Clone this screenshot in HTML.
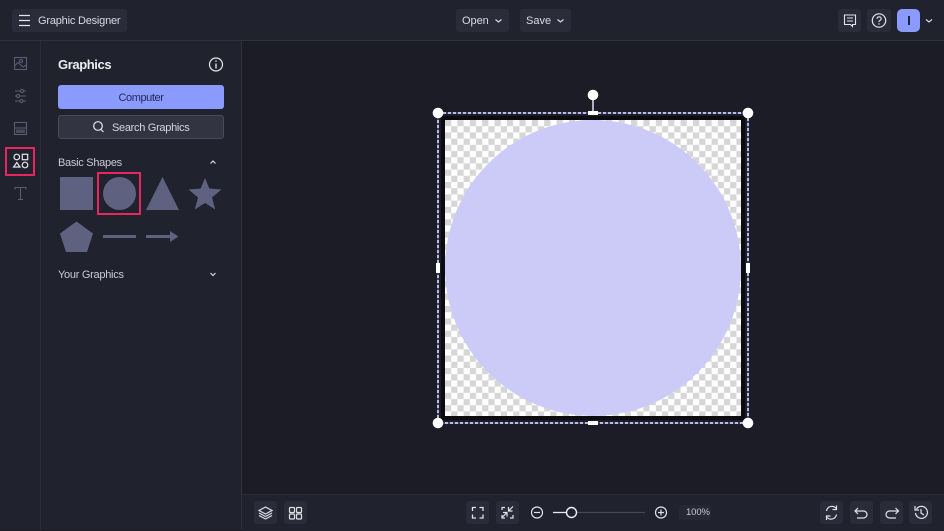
<!DOCTYPE html>
<html><head><meta charset="utf-8"><style>
html,body{margin:0;padding:0}
body{width:944px;height:530px;overflow:hidden;background:#1c1c26;position:relative;font-family:"Liberation Sans",sans-serif;color:#d9dae2}
.a{position:absolute}
.b{position:absolute;background:#2a2c39;border-radius:3px}
.t{position:absolute;white-space:nowrap;line-height:14px}
svg{position:absolute;overflow:visible}
</style></head><body>
<div class="a" style="left:0;top:0;width:944px;height:40px;background:#20222e;border-bottom:1px solid #2f313d"></div>
<div class="a" style="left:0;top:41px;width:40px;height:489px;background:#20222e;border-right:1px solid #2a2c38"></div>
<div class="a" style="left:41px;top:41px;width:200px;height:489px;background:#20222e;border-right:1px solid #2f313d"></div>
<div class="a" style="left:242px;top:494px;width:702px;height:36px;background:#20222e;border-top:1px solid #2a2c38"></div>

<div class="b" style="left:12px;top:9px;width:115px;height:23px"></div>
<svg style="left:0;top:0" width="40" height="40"><path d="M19 15.500H30M19 20.500H30M19 25.500H30" stroke="#e4e5ec" stroke-width="1.300" fill="none"/></svg>
<div class="t" style="left:38px;top:14px;font-size:11px;letter-spacing:-.2px">Graphic Designer</div>

<div class="b" style="left:456px;top:9px;width:53px;height:23px"></div>
<div class="t" style="left:462px;top:14px;font-size:11px;letter-spacing:-.05px">Open</div>
<svg style="left:0;top:0" width="10" height="10"><path d="M495.500 19.500L498.500 22L501.500 19.500" stroke="#d9dae2" stroke-width="1.200" fill="none"/></svg>
<div class="b" style="left:520px;top:9px;width:51px;height:23px"></div>
<div class="t" style="left:526px;top:14px;font-size:11px;letter-spacing:0">Save</div>
<svg style="left:0;top:0" width="10" height="10"><path d="M557.500 19.500L560.500 22L563.500 19.500" stroke="#d9dae2" stroke-width="1.200" fill="none"/></svg>

<div class="b" style="left:838px;top:9px;width:23px;height:23px"></div>
<div class="b" style="left:867px;top:9px;width:24px;height:23px"></div>
<div class="a" style="left:897px;top:9px;width:23px;height:23px;background:#8b9bfd;border-radius:5px"></div>
<div class="a" style="left:908px;top:16px;width:1.500px;height:9px;background:#20243c"></div>
<svg style="left:0;top:0" width="10" height="10">
<path d="M844.500 15H855.500V24.500H852.500V26.500L850.500 24.500H844.500Z M847 18H853M847 21H853" stroke="#e4e5ec" stroke-width="1.100" fill="none"/>
<circle cx="879" cy="20.500" r="6.700" stroke="#e4e5ec" stroke-width="1.200" fill="none"/>
<path d="M877 18.800C877 16 881.200 16.300 881.200 18.800C881.200 20.400 879 20.300 879 22" stroke="#e4e5ec" stroke-width="1.100" fill="none"/>
<circle cx="879" cy="24" r=".7" fill="#e4e5ec"/>
<path d="M926 19.500L929 22L932 19.500" stroke="#d9dae2" stroke-width="1.200" fill="none"/>
</svg>

<svg style="left:0;top:0" width="40" height="10" fill="none" stroke="#5a5c72" stroke-width="1.100">
<rect x="14.500" y="57.500" width="12" height="12"/><circle cx="21" cy="61" r="1.500"/><path d="M14.500 66L18 62.500L23 67L26.500 65"/>
<path d="M15 91H26M15 96H26M15 101H26"/><circle cx="22" cy="91" r="1.600" fill="#20222e"/><circle cx="18" cy="96" r="1.600" fill="#20222e"/><circle cx="21.500" cy="101" r="1.600" fill="#20222e"/>
<rect x="14.500" y="122.500" width="12" height="12"/><path d="M14.500 128H26.500"/><rect x="16" y="129.500" width="9" height="3.500" fill="#5a5c72" stroke="none" opacity=".7"/>
<path d="M15 189.500V187.500H26V189.500M20.500 187.500V199.500M18 199.500H23" />
</svg>
<div class="a" style="left:5px;top:147px;width:26px;height:25px;border:2.500px solid #e8265f;background:#20222e"></div>
<svg style="left:0;top:0" width="40" height="10" fill="none" stroke="#e6e7ee" stroke-width="1.200">
<circle cx="16.800" cy="157" r="2.800"/><rect x="22.300" y="154.300" width="5.400" height="5.400"/><path d="M16.800 162.500L20 167H13.600Z"/><circle cx="25" cy="165" r="2.800"/>
</svg>

<div class="t" style="left:58px;top:58px;font-size:13px;font-weight:bold;letter-spacing:-.4px;color:#eceded">Graphics</div>
<svg style="left:0;top:0" width="10" height="10" fill="none">
<circle cx="216" cy="64.500" r="6.500" stroke="#e6e7ee" stroke-width="1.200"/><path d="M216 63.500V68.500" stroke="#e6e7ee" stroke-width="1.300"/><circle cx="216" cy="61" r=".8" fill="#e6e7ee"/>
</svg>
<div class="a" style="left:58px;top:85px;width:166px;height:24px;background:#8b9bfd;border-radius:3px"></div>
<div class="t" style="left:58px;top:91px;width:166px;text-align:center;font-size:11px;color:#23285a;letter-spacing:-.4px">Computer</div>
<div class="a" style="left:58px;top:115px;width:164px;height:22px;background:#323442;border:1px solid #484a59;border-radius:3px"></div>
<svg style="left:0;top:0" width="10" height="10" fill="none" stroke="#e6e7ee" stroke-width="1.200"><circle cx="98" cy="126" r="4.300"/><path d="M101 129.500L103.500 132"/></svg>
<div class="t" style="left:112px;top:121px;font-size:11px;letter-spacing:-.3px;color:#d5d6df">Search Graphics</div>

<div class="t" style="left:58px;top:156px;font-size:11px;letter-spacing:-.28px;color:#c9cad4">Basic Shapes</div>
<svg style="left:0;top:0" width="10" height="10" fill="none" stroke="#d9dae2" stroke-width="1.200"><path d="M210.500 163.500L213 161L215.500 163.500M210.500 273L213 275.500L215.500 273"/></svg>
<div class="a" style="left:97px;top:172px;width:39.500px;height:38.500px;border:2.500px solid #e8265f"></div>
<svg style="left:0;top:0" width="10" height="10" fill="#5f6180">
<rect x="60" y="177" width="33" height="33"/>
<circle cx="119.500" cy="193.500" r="16.500"/>
<path d="M162.500 177L179 210H146Z"/>
<path d="M205 178L209.300 188.500L221.500 189.500L212 197.500L215.200 209.500L205 203L194.800 209.500L198 197.500L188.500 189.500L200.700 188.500Z"/>
<path d="M76.500 221.500L93 233.500L87 252H66L60 233.500Z"/>
<rect x="103" y="235" width="33" height="3"/>
<path d="M146 235H170V231L178.500 236.500L170 242V238H146Z"/>
</svg>
<div class="t" style="left:58px;top:268px;font-size:11px;letter-spacing:-.28px;color:#c9cad4">Your Graphics</div>

<svg style="left:0;top:0" width="944" height="530">
<defs><pattern id="c" x="445" y="120" width="12.400" height="12.400" patternUnits="userSpaceOnUse"><rect width="12.400" height="12.400" fill="#fff"/><rect width="6.200" height="6.200" fill="#d6d6d6"/><rect x="6.200" y="6.200" width="6.200" height="6.200" fill="#d6d6d6"/></pattern></defs>
<rect x="441" y="116" width="304" height="304" fill="#0b0b10"/>
<rect x="445" y="120" width="296" height="296" fill="url(#c)"/>
<circle cx="593" cy="268" r="148" fill="#cccbf8"/>
<rect x="438" y="113" width="310" height="310" fill="none" stroke="#3f4490" stroke-width="1.500"/>
<rect x="438" y="113" width="310" height="310" fill="none" stroke="#eceeff" stroke-width="1.500" stroke-dasharray="3 2"/>
<path d="M593 100V113" stroke="#dfe2ff" stroke-width="1.500"/>
<rect x="588" y="111" width="10" height="4" fill="#fff"/><rect x="588" y="421" width="10" height="4" fill="#fff"/>
<rect x="436" y="263" width="4" height="10" fill="#fff"/><rect x="746" y="263" width="4" height="10" fill="#fff"/>
<g fill="#fff"><circle cx="438" cy="113" r="5.300"/><circle cx="748" cy="113" r="5.300"/><circle cx="438" cy="423" r="5.300"/><circle cx="748" cy="423" r="5.300"/><circle cx="593" cy="95" r="5.300"/></g>
</svg>

<div class="b" style="left:254px;top:501px;width:23px;height:23px"></div>
<div class="b" style="left:284px;top:501px;width:23px;height:23px"></div>
<div class="b" style="left:466px;top:501px;width:23px;height:23px"></div>
<div class="b" style="left:496px;top:501px;width:23px;height:23px"></div>
<div class="b" style="left:679px;top:505px;width:32px;height:15px;background:#262834"></div>
<div class="t" style="left:686px;top:506px;font-size:9.500px;letter-spacing:-.1px;color:#c9cad4">100%</div>
<div class="b" style="left:820px;top:501px;width:23px;height:23px"></div>
<div class="b" style="left:850px;top:501px;width:23px;height:23px"></div>
<div class="b" style="left:880px;top:501px;width:23px;height:23px"></div>
<div class="b" style="left:909px;top:501px;width:23px;height:23px"></div>

<svg style="left:0;top:0" width="10" height="10" fill="none" stroke="#e0e1e8" stroke-width="1.200">
<path d="M265.500 507L272 510.500L265.500 514L259 510.500Z M259 513L265.500 516.500L272 513M259 515.500L265.500 519L272 515.500"/>
<rect x="289.500" y="507.500" width="5" height="5" rx="1"/><rect x="296.500" y="507.500" width="5" height="5" rx="1"/><rect x="289.500" y="514" width="5" height="5" rx="1"/><rect x="296.500" y="514" width="5" height="5" rx="1"/>
<path d="M472.500 511V507.500H476M479.500 507.500H483V511M483 514.500V518H479.500M476 518H472.500V514.500" stroke-width="1.300"/>
<path d="M502 510V507.500H505M512.500 511H508.500V507M509 510.500L513 506.500M502 515V518H505M503 512.500H507V516.500M506.500 513L502.500 517M513 515V518H510" stroke-width="1.200"/>
<circle cx="537" cy="512.500" r="5.500"/><path d="M534 512.500H540"/>
<path d="M553 512.500H566" stroke="#e6e7ee" stroke-width="1.300"/>
<path d="M577 512.500H645" stroke="#45475a" stroke-width="1.200"/>
<circle cx="571.500" cy="512.500" r="5" stroke="#f0f0f5" stroke-width="1.400"/>
<circle cx="661" cy="512.500" r="5.500"/><path d="M658 512.500H664M661 509.500V515.500"/>
<path d="M826.500 511C827.500 505.500 834.500 505 836.500 509M836.500 505.500V509.500H832.500M836.500 514.500C835.500 520 828.500 520.500 826.500 516.500M826.500 520V516H830.500"/>
<path d="M858 508L855 511L858 514M855 511H863.500A3.500 3.500 0 0 1 863.500 518H857"/>
<path d="M895.500 508L898.500 511L895.500 514M898.500 511H889.500A3.500 3.500 0 0 0 889.500 518H896"/>
<path d="M916.500 509A6 6 0 1 1 915.500 513M915 506V510H919M921 509V513L924 515"/>
</svg>
</body></html>
